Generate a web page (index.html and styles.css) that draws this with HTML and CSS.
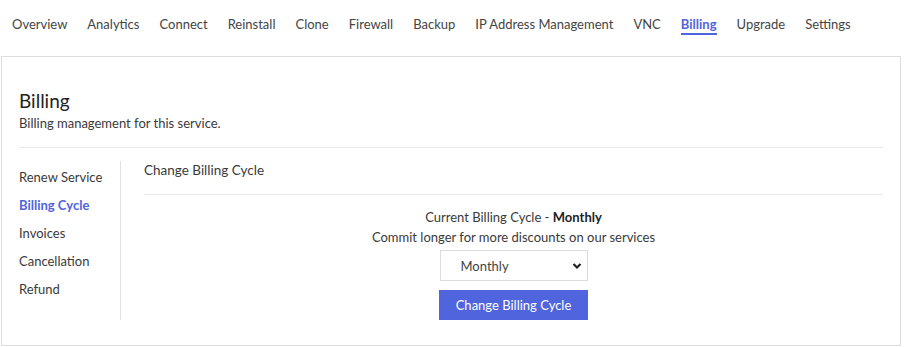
FILE: index.html
```html
<!DOCTYPE html>
<html>
<head>
<meta charset="utf-8">
<link rel="stylesheet" href="styles.css">
</head>
<body>
<nav class="tabs">
  <a class="tab">Overview</a>
  <a class="tab">Analytics</a>
  <a class="tab">Connect</a>
  <a class="tab">Reinstall</a>
  <a class="tab">Clone</a>
  <a class="tab">Firewall</a>
  <a class="tab">Backup</a>
  <a class="tab">IP Address Management</a>
  <a class="tab">VNC</a>
  <a class="tab active">Billing</a>
  <a class="tab">Upgrade</a>
  <a class="tab">Settings</a>
</nav>
<section class="card">
  <h1 class="title">Billing</h1>
  <p class="subtitle">Billing management for this service.</p>
  <hr class="rule">
  <div class="body">
    <ul class="side">
      <li>Renew Service</li>
      <li class="active">Billing Cycle</li>
      <li>Invoices</li>
      <li>Cancellation</li>
      <li>Refund</li>
    </ul>
    <div class="main">
      <h2 class="main-title">Change Billing Cycle</h2>
      <hr class="rule">
      <div class="center">
        <p class="line">Current Billing Cycle - <b>Monthly</b></p>
        <p class="line">Commit longer for more discounts on our services</p>
        <div class="select">
          <span>Monthly</span>
          <svg class="chev" width="10" height="8" viewBox="0 0 10 8"><path d="M1.5 2 L5 5.5 L8.5 2" fill="none" stroke="#222" stroke-width="2.2"/></svg>
        </div>
        <button class="btn">Change Billing Cycle</button>
      </div>
    </div>
  </div>
</section>
</body>
</html>
```
FILE: styles.css
```css
* { box-sizing: border-box; }
body {
  margin: 0;
  font-family: Lato, "Open Sans", sans-serif;
  color: #3a3a3a;
  background: #fff;
  font-size: 13px;
}
.tabs {
  display: flex;
  gap: 20px;
  padding: 0 12px;
  height: 56px;
  align-items: center;
  padding-bottom: 8px;
}
.tab {
  font-size: 13px;
  color: #444;
  line-height: 18px;
  padding-top: 2px;
  border-bottom: 2px solid transparent;
}
.tab.active {
  color: #5064dd;
  font-weight: 700;
  border-bottom-color: #5064dd;
}
.card {
  margin: 0 3px 0 1px;
  height: 290px;
  border: 1px solid #dedede;
  padding: 33px 17px 0 17px;
}
.title {
  margin: 0;
  font-size: 19px;
  font-weight: 400;
  color: #222;
  line-height: 22px;
}
.subtitle {
  margin: 2px 0 0;
  font-size: 13px;
  color: #3a3a3a;
  line-height: 18px;
}
.rule {
  border: 0;
  border-top: 1px solid #e8e8e8;
  margin: 15px 0 0;
}
.body {
  display: flex;
  margin-top: 13px;
}
.side {
  list-style: none;
  margin: 0;
  padding: 7px 0 0;
  width: 102px;
  border-right: 1px solid #e0e0e0;
  height: 159px;
}
.side li {
  line-height: 18px;
  margin-bottom: 10px;
  color: #3a3a3a;
}
.side li.active {
  color: #5064dd;
  font-weight: 700;
}
.main {
  flex: 1;
  padding-left: 23px;
}
.main-title {
  margin: 0;
  font-size: 13.5px;
  font-weight: 400;
  line-height: 18px;
  color: #3a3a3a;
}
.main .rule { margin-top: 15px; }
.center {
  display: flex;
  flex-direction: column;
  align-items: center;
  padding-top: 12px;
}
.line {
  margin: 0;
  line-height: 20px;
  color: #3a3a3a;
}
.line b { color: #222; }
.select {
  margin-top: 3px;
  width: 148px;
  height: 31px;
  border: 1px solid #dcdcdc;
  display: flex;
  align-items: center;
  justify-content: space-between;
  padding: 0 5px 0 20px;
  color: #444;
}
.btn {
  margin-top: 9px;
  width: 149px;
  height: 30px;
  border: 0;
  background: #5064dd;
  color: #fff;
  font-family: inherit;
  font-size: 13px;
  padding: 0;
}
```
